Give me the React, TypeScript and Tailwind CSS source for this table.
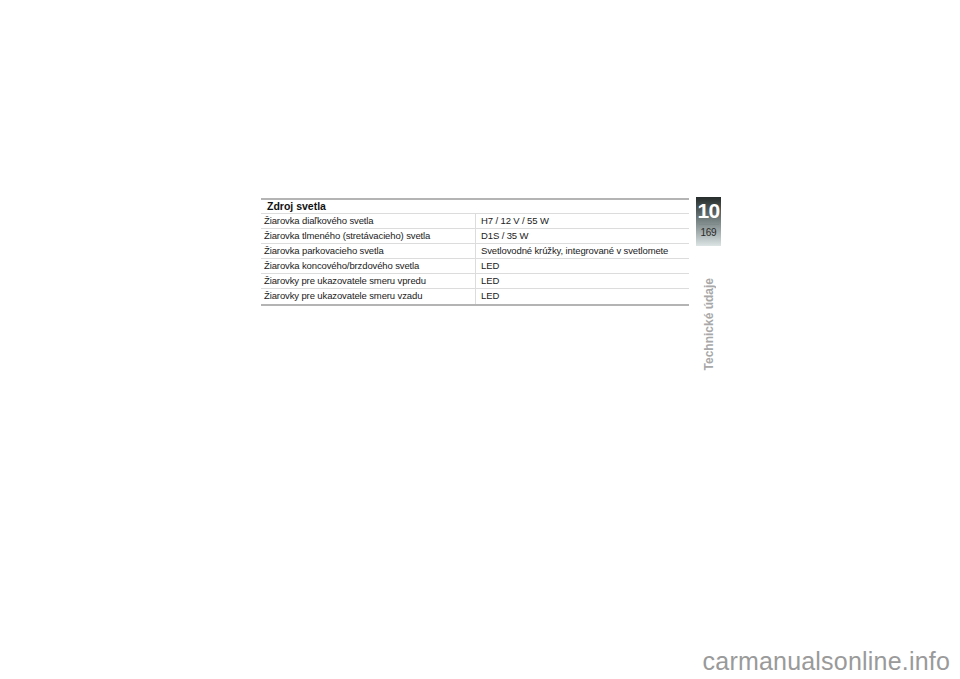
import React from "react";

const rows: [string, string][] = [
  ["Žiarovka diaľkového svetla", "H7 / 12 V / 55 W"],
  ["Žiarovka tlmeného (stretávacieho) svetla", "D1S / 35 W"],
  ["Žiarovka parkovacieho svetla", "Svetlovodné krúžky, integrované v svetlomete"],
  ["Žiarovka koncového/brzdového svetla", "LED"],
  ["Žiarovky pre ukazovatele smeru vpredu", "LED"],
  ["Žiarovky pre ukazovatele smeru vzadu", "LED"],
];

export default function App() {
  return (
    <div
      className="w-[960px] h-[679px] bg-white flex flex-col"
      style={{ fontFamily: '"Liberation Sans", Arial, sans-serif' }}
    >
      <div className="flex pt-[197px] pl-[261px]">
        <div className="w-[428px] flex flex-col">
          <div className="h-[2px] bg-[#b4b4b4] mt-[1px]" />
          <div className="h-[14px] flex items-center pl-[6px] text-[10.5px] font-bold text-[#111] border-b border-[#dcdcdc]">
            Zdroj svetla
          </div>
          {rows.map(([a, b], i) => (
            <div
              key={i}
              className={
                i === rows.length - 1
                  ? "h-[15px] flex text-[9.5px] text-[#222] tracking-[-0.12px]"
                  : "h-[15px] flex text-[9.5px] text-[#222] tracking-[-0.12px] border-b border-[#dcdcdc]"
              }
            >
              <div className="w-[215px] pl-[3px] flex items-center border-r border-[#dcdcdc] whitespace-nowrap">
                {a}
              </div>
              <div className="flex-1 pl-[5px] flex items-center whitespace-nowrap">
                {b}
              </div>
            </div>
          ))}
          <div className="h-[2px] bg-[#b4b4b4]" />
        </div>
        <div className="ml-[7px] w-[25px] flex flex-col items-center">
          <div className="w-[25px] h-[49px] flex flex-col items-center bg-gradient-to-b from-[#262c2c] via-[#7a8585] to-[#dce4e4]">
            <div className="text-[21px] font-bold text-white leading-none mt-[3px] tracking-[-0.6px]">
              10
            </div>
            <div className="w-[20px] h-[1px] bg-[#7f8a8a] mt-[3px]" />
            <div className="text-[10px] text-[#2a2a2a] leading-none mt-[3px] tracking-[-0.3px]">169</div>
          </div>
          <div className="mt-[32px] [writing-mode:vertical-rl] rotate-180 text-[12px] font-bold text-[#a8a8a8] leading-none">
            Technické údaje
          </div>
        </div>
      </div>
      <div className="mt-auto flex justify-end pr-[10px] pb-[5px]">
        <div className="text-[25px] text-[#9a9a9a] leading-none tracking-[0.2px]">
          carmanualsonline.info
        </div>
      </div>
    </div>
  );
}
